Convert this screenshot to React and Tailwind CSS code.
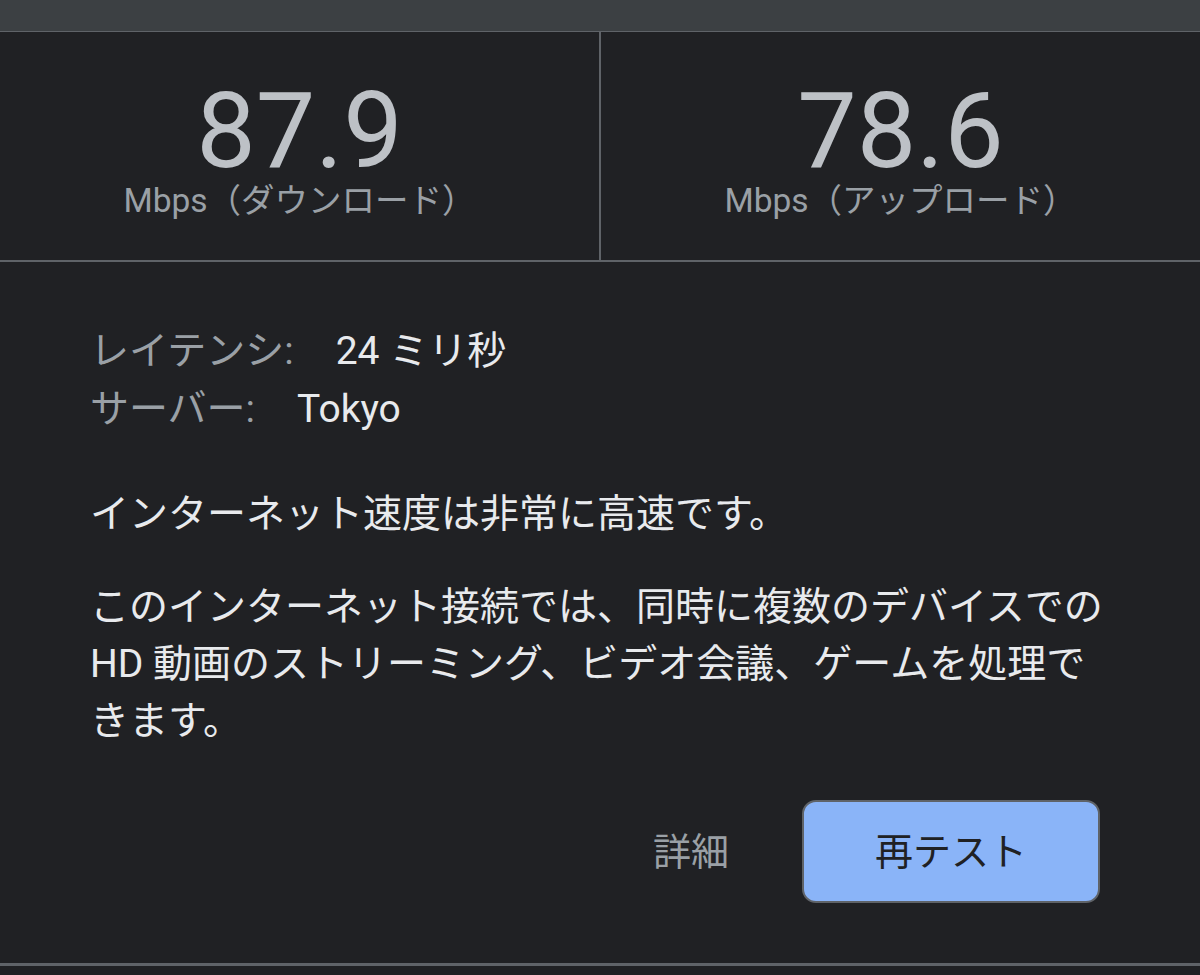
const font = { fontFamily: 'Roboto, "Noto Sans CJK JP", sans-serif' };

const Stat = ({ value, label }) => (
    <div className="flex-1 flex flex-col items-center pt-[59px]">
        <div className="text-[106px] leading-[80px] text-[#bdc1c6]">{value}</div>
        <div className="text-[33.5px] leading-none text-[#9aa0a6] mt-[13px]">{label}</div>
    </div>
);

export default function App() {
    return (
        <div className="w-[1200px] h-[975px] bg-[#202124] flex flex-col overflow-hidden" style={font}>
            {/* Top bar */}
            <div className="h-[32px] bg-[#3c4043] border-b border-[#5f6368] shrink-0"></div>

            {/* Speed results */}
            <div className="h-[230px] flex border-b-2 border-[#5f6368] shrink-0">
                <Stat value="87.9" label="Mbps（ダウンロード）" />
                <div className="w-[2px] bg-[#5f6368]"></div>
                <Stat value="78.6" label="Mbps（アップロード）" />
            </div>

            {/* Details */}
            <div className="flex-1 flex flex-col pl-[90px] pr-[100px] pt-[61px] text-[39px] leading-[57px]">
                <div className="flex">
                    <span className="text-[#9aa0a6]">レイテンシ:</span>
                    <span className="text-[#e8eaed] ml-[42px]">24 ミリ秒</span>
                </div>
                <div className="flex mt-px">
                    <span className="text-[#9aa0a6]">サーバー:</span>
                    <span className="text-[#e8eaed] ml-[42px]">Tokyo</span>
                </div>

                <p className="text-[#e8eaed] mt-[48px]">インターネット速度は非常に高速です。</p>

                <p className="text-[#e8eaed] mt-[36px] whitespace-nowrap">
                    このインターネット接続では、同時に複数のデバイスでの
                    <br />
                    HD 動画のストリーミング、ビデオ会議、ゲームを処理で
                    <br />
                    きます。
                </p>

                <div className="flex justify-end items-center gap-[73px] mt-[50px]">
                    <button className="text-[#9aa0a6] text-[38px] leading-none">詳細</button>
                    <button className="w-[298px] h-[103px] bg-[#8ab4f8] border-2 border-[#5f6368] rounded-[14px] text-[#202124] text-[38px] leading-none flex items-center justify-center">
                        再テスト
                    </button>
                </div>
            </div>

            {/* Bottom edge */}
            <div className="h-[12px] border-t-[3px] border-[#5f6368] bg-[#202124] shrink-0"></div>
        </div>
    );
}
